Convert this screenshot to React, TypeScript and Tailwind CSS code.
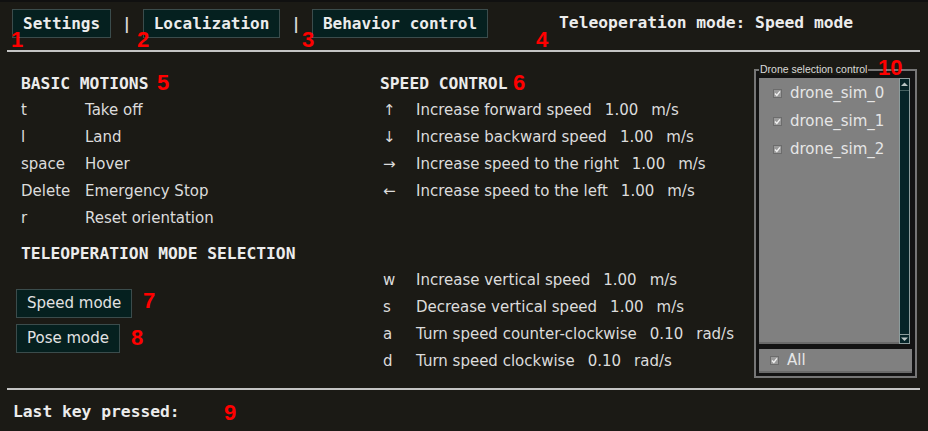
const mono = "font-['DejaVu_Sans_Mono',monospace] font-bold";
const sans = "font-['DejaVu_Sans',sans-serif]";

const basicMotions = [
  ["t", "Take off"],
  ["l", "Land"],
  ["space", "Hover"],
  ["Delete", "Emergency Stop"],
  ["r", "Reset orientation"],
];

const speedRows = [
  ["↑", "Increase forward speed", "1.00", "m/s"],
  ["↓", "Increase backward speed", "1.00", "m/s"],
  ["→", "Increase speed to the right", "1.00", "m/s"],
  ["←", "Increase speed to the left", "1.00", "m/s"],
];

const verticalRows = [
  ["w", "Increase vertical speed", "1.00", "m/s"],
  ["s", "Decrease vertical speed", "1.00", "m/s"],
  ["a", "Turn speed counter-clockwise", "0.10", "rad/s"],
  ["d", "Turn speed clockwise", "0.10", "rad/s"],
];

const drones = ["drone_sim_0", "drone_sim_1", "drone_sim_2"];

const TabButton = ({ label }: { label: string }) => (
  <div className="h-[29px] px-[10px] flex items-center bg-[#05201f] border border-[#3b4c4c] text-[16px] text-[#ececec]">
    {label}
  </div>
);

const ModeButton = ({ label }: { label: string }) => (
  <div className={`${sans} h-[29px] px-[10px] flex items-center self-start bg-[#05201f] border border-[#3b4c4c] text-[15px] text-[#e2e2e2]`}>
    {label}
  </div>
);

const Check = () => (
  <svg width="9" height="9" viewBox="0 0 9 9" className="shrink-0">
    <rect x="0.5" y="0.5" width="8" height="8" fill="#9a9a9a" stroke="#6c6c6c" />
    <path d="M2 4.6 L3.8 6.4 L7 2.4" fill="none" stroke="#f2f2f2" strokeWidth="1.4" />
  </svg>
);

const SpeedRow = ({ row }: { row: string[] }) => (
  <div className="flex items-center h-[27px]">
    <span className="w-[33px]">{row[0]}</span>
    <div className="flex gap-[13px]">
      <span>{row[1]}</span>
      <span>{row[2]}</span>
      <span>{row[3]}</span>
    </div>
  </div>
);

const Label = ({ n, className }: { n: string; className: string }) => (
  <span
    className={`absolute font-['Liberation_Sans',sans-serif] font-bold text-[22px] leading-none text-[#ff0000] ${className}`}
  >
    {n}
  </span>
);

export default function App() {
  return (
    <div className="relative w-[928px] h-[431px] bg-[#1b1a15] overflow-hidden border-t-2 border-[#101010]">
      {/* top bar */}
      <div className={`${mono} flex items-center pt-[7px] pl-[12px]`}>
        <TabButton label="Settings" />
        <span className="mx-[11px] text-[16px] text-[#d8d8d8]">|</span>
        <TabButton label="Localization" />
        <span className="mx-[11px] text-[16px] text-[#d8d8d8]">|</span>
        <TabButton label="Behavior control" />
        <span className="ml-[71px] text-[16.3px] text-[#ececec]">
          Teleoperation mode: Speed mode
        </span>
      </div>
      <div className="mt-[12px] ml-[7px] w-[913px] h-[2px] bg-[#c4c4c4]" />

      {/* body */}
      <div className="flex h-[336px]">
        <div className="w-[380px] pl-[16px] pt-[18px] flex flex-col">
          <div className={`${mono} pl-[5px] leading-[27px] text-[16.3px] text-[#ececec]`}>
            BASIC MOTIONS
          </div>
          <div className={`${sans} pl-[5px] text-[15px] text-[#dcdcdc]`}>
            {basicMotions.map(([k, d]) => (
              <div key={k} className="flex items-center h-[27px]">
                <span className="w-[64px]">{k}</span>
                <span>{d}</span>
              </div>
            ))}
          </div>
          <div className={`${mono} pl-[5px] mt-[8px] leading-[27px] text-[16.3px] text-[#ececec]`}>
            TELEOPERATION MODE SELECTION
          </div>
          <div className="mt-[22px] flex flex-col gap-[6px]">
            <ModeButton label="Speed mode" />
            <ModeButton label="Pose mode" />
          </div>
        </div>

        <div className="w-[374px] pt-[18px]">
          <div className={`${mono} leading-[27px] text-[16.3px] text-[#ececec]`}>SPEED CONTROL</div>
          <div className={`${sans} pl-[3px] text-[15px] text-[#dcdcdc]`}>
            {speedRows.map((r) => (
              <SpeedRow key={r[1]} row={r} />
            ))}
            <div className="mt-[62px]">
              {verticalRows.map((r) => (
                <SpeedRow key={r[1]} row={r} />
              ))}
            </div>
          </div>
        </div>

        {/* drone selection group */}
        <div className="relative mt-[17px] w-[163px] h-[309px] border-2 border-[#767676] bg-[#131313] px-[3px] pt-[7px] pb-[2px] flex flex-col">
          <span className="absolute left-[3px] top-[-8px] px-[1px] bg-[#1b1a15] font-['Liberation_Sans',sans-serif] text-[10.5px] leading-[12px] text-[#dadada]">
            Drone selection control
          </span>
          <div className="flex h-[266px]">
            <div className={`${sans} w-[140px] bg-[#808080] border-b-2 border-[#6a6a6a] pt-[1px] text-[15px] text-[#e6e6e6]`}>
              {drones.map((d) => (
                <div key={d} className="flex items-center h-[28px] pl-[14px] gap-[8px]">
                  <Check />
                  <span>{d}</span>
                </div>
              ))}
            </div>
            <div className="w-[11px] flex flex-col bg-[#062428] border border-[#8c9c9c]">
              <div className="h-[12px] flex items-center justify-center border-b border-[#456060]">
                <svg width="7" height="5" viewBox="0 0 7 5">
                  <path d="M0 4 L3.5 0.5 L7 4 Z" fill="#b8c4c4" />
                </svg>
              </div>
              <div className="flex-1" />
              <div className="h-[9px] flex items-center justify-center border-t border-[#8c9c9c]">
                <svg width="7" height="4" viewBox="0 0 7 4">
                  <path d="M0 0.5 L7 0.5 L3.5 4 Z" fill="#b8c4c4" />
                </svg>
              </div>
            </div>
          </div>
          <div className={`${sans} mt-[5px] h-[24px] bg-[#808080] border-b-2 border-[#6a6a6a] flex items-center pl-[11px] gap-[8px] text-[15px] text-[#e6e6e6]`}>
            <Check />
            <span>All</span>
          </div>
        </div>
      </div>

      {/* footer */}
      <div className="ml-[7px] w-[913px] h-[2px] bg-[#c4c4c4]" />
      <div className={`${mono} mt-[8px] pl-[13px] leading-[27px] text-[16.3px] text-[#ececec]`}>
        Last key pressed:
      </div>

      <Label n="1" className="left-[11px] top-[27px]" />
      <Label n="2" className="left-[137px] top-[27px]" />
      <Label n="3" className="left-[302px] top-[27px]" />
      <Label n="4" className="left-[536px] top-[27px]" />
      <Label n="5" className="left-[157px] top-[70px]" />
      <Label n="6" className="left-[513px] top-[70px]" />
      <Label n="7" className="left-[143px] top-[288px]" />
      <Label n="8" className="left-[131px] top-[325px]" />
      <Label n="9" className="left-[224px] top-[400px]" />
      <Label n="10" className="left-[878px] top-[55px]" />
    </div>
  );
}
